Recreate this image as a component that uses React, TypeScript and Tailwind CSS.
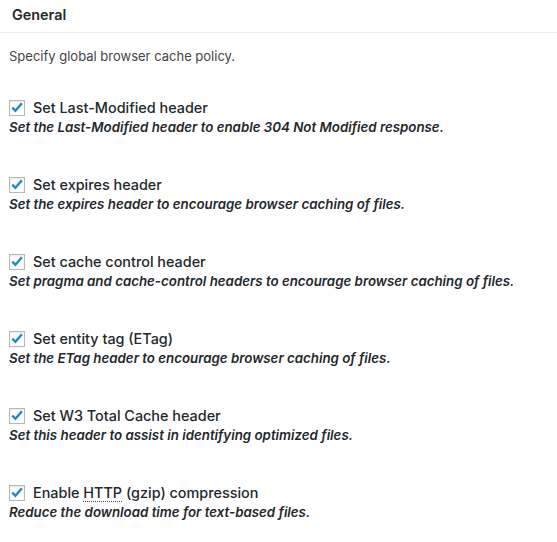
import React from "react";

const items: { label: React.ReactNode; desc: string }[] = [
  { label: "Set Last-Modified header", desc: "Set the Last-Modified header to enable 304 Not Modified response." },
  { label: "Set expires header", desc: "Set the expires header to encourage browser caching of files." },
  { label: "Set cache control header", desc: "Set pragma and cache-control headers to encourage browser caching of files." },
  { label: "Set entity tag (ETag)", desc: "Set the ETag header to encourage browser caching of files." },
  { label: "Set W3 Total Cache header", desc: "Set this header to assist in identifying optimized files." },
  {
    label: (
      <>
        Enable <abbr className="border-b border-dotted border-[#444] [text-decoration:none]">HTTP</abbr> (gzip) compression
      </>
    ),
    desc: "Reduce the download time for text-based files.",
  },
];

function Check() {
  return (
    <span className="w-4 h-4 shrink-0 border border-[#b4b9be] bg-white shadow-[inset_0_1px_2px_rgba(0,0,0,0.1)] flex items-center justify-center">
      <svg viewBox="0 0 16 16" className="w-4 h-4">
        <path d="M2.6 7.6 L6.2 11.2 L13.6 2.6" fill="none" stroke="#1e8cbe" strokeWidth="2.8" strokeLinecap="butt" strokeLinejoin="miter" />
      </svg>
    </span>
  );
}

export default function App() {
  return (
    <div className="w-[557px] h-[542px] bg-white text-[#23282d] font-['Inter','Noto_Sans',sans-serif] overflow-hidden">
      <div className="h-[33px] border-b border-[#eeeeee] px-3 flex items-center">
        <h2 className="text-[14.4px] font-semibold leading-none mt-[-2px]">General</h2>
      </div>
      <div className="pl-[9px]">
        <p className="text-[13px] text-[#444] mt-[14px] leading-[18px]">Specify global browser cache policy.</p>
        <div className="mt-[34px] flex flex-col gap-[40px]">
          {items.map((it, i) => (
            <div key={i} className="flex flex-col">
              <label className="flex items-center gap-[8px] h-[18px]">
                <Check />
                <span className="text-[14.4px] font-medium text-[#23282d] leading-[18px]">{it.label}</span>
              </label>
              <span className="text-[13.3px] italic font-semibold text-[#23282d] leading-[18px] mt-[1px]">{it.desc}</span>
            </div>
          ))}
        </div>
      </div>
    </div>
  );
}
